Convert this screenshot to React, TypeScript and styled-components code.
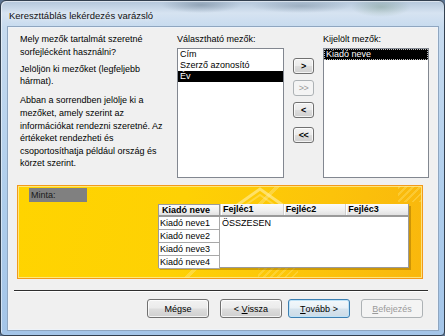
import React from 'react';
import styled, { createGlobalStyle, css } from 'styled-components';

const GlobalStyle = createGlobalStyle`
  html, body {
    margin: 0;
    padding: 0;
  }
  body {
    width: 445px;
    height: 336px;
    overflow: hidden;
    background: #5d7592;
    font-family: 'Liberation Sans', Arial, sans-serif;
  }
`;

const Window = styled.div`
  box-sizing: border-box;
  width: 445px;
  height: 336px;
  display: flex;
  flex-direction: column;
  border: 1px solid #33404f;
  border-radius: 6px 6px 4px 4px;
  padding: 0 6px 5px 7px;
  background:
    radial-gradient(ellipse 40px 8px at 200px 4px, rgba(90, 110, 130, 0.45), transparent),
    radial-gradient(ellipse 50px 7px at 300px 5px, rgba(90, 110, 130, 0.35), transparent),
    radial-gradient(ellipse 30px 10px at 380px 6px, rgba(80, 120, 90, 0.3), transparent),
    linear-gradient(180deg, #b3c6da 0px, #d6e3f1 12px, #c7dbef 26px, #aecdec 60%, #a4c5e8 100%);
  box-shadow: inset 1px 1px 0 rgba(255, 255, 255, 0.5);
`;

const TitleBar = styled.div`
  height: 26px;
  display: flex;
  align-items: center;
  padding: 2px 0 0 1px;
  box-sizing: border-box;
  font-size: 9.5px;
  color: #111;
  text-shadow: 0 0 6px rgba(255, 255, 255, 0.9);
`;

const Client = styled.div`
  flex: 1;
  display: flex;
  flex-direction: column;
  background: #f0f0f0;
  border: 1px solid #eef3f9;
  box-shadow: 0 0 0 1px #8fa6c0;
  font-size: 9px;
  color: #000;
`;

const TopSection = styled.div`
  display: grid;
  grid-template-columns: 148px 107px 21px 106px;
  column-gap: 9px;
  padding: 5px 0 0 11px;
`;

const Explain = styled.div`
  line-height: 12.6px;
  white-space: nowrap;
`;

const Para = styled.p<{ $after?: number }>`
  margin: 0 0 ${({ $after }) => $after ?? 0}px;
`;

const FieldColumn = styled.div`
  display: flex;
  flex-direction: column;
`;

const FieldLabel = styled.div`
  line-height: 12.6px;
  height: 15px;
`;

const ListBox = styled.div`
  box-sizing: border-box;
  height: 130px;
  background: #fff;
  border: 1px solid #828790;
`;

const ListItem = styled.div<{ $selected?: boolean; $focus?: boolean }>`
  height: 11px;
  line-height: 11px;
  padding-left: 2px;
  white-space: nowrap;
  ${({ $selected }) =>
    $selected &&
    css`
      background: #000;
      color: #fff;
    `}
  ${({ $focus }) =>
    $focus &&
    css`
      outline: 1px dotted #bbb;
      outline-offset: -1px;
    `}
`;

const ArrowColumn = styled.div`
  display: flex;
  flex-direction: column;
  padding-top: 25px;
`;

const buttonFace = css`
  box-sizing: border-box;
  border: 1px solid #707070;
  border-radius: 3px;
  background: linear-gradient(180deg, #f2f2f2 0%, #ebebeb 48%, #dddddd 52%, #cfcfcf 100%);
  box-shadow: inset 0 0 0 1px rgba(255, 255, 255, 0.75);
  font-family: 'Liberation Sans', Arial, sans-serif;
  color: #000;
  padding: 0;
  display: flex;
  align-items: center;
  justify-content: center;
  white-space: pre;
`;

const disabledFace = css`
  border-color: #adb2b5;
  background: #f4f4f4;
  box-shadow: none;
  color: #9a9a9a;
`;

const ArrowButton = styled.button<{ $disabled?: boolean; $gap?: number }>`
  ${buttonFace}
  width: 21px;
  height: 16px;
  margin-top: ${({ $gap }) => $gap ?? 0}px;
  font-size: 9px;
  font-weight: bold;
  letter-spacing: -0.5px;
  ${({ $disabled }) => $disabled && disabledFace}
  ${({ $disabled }) => $disabled && css`font-weight: normal;`}
`;

const SamplePanel = styled.div`
  box-sizing: border-box;
  width: 406px;
  height: 94px;
  margin: 7px 0 0 8px;
  border: 1px solid #f39a1b;
  box-shadow: inset 0 0 0 1px rgba(255, 236, 150, 0.8);
  display: flex;
  flex-direction: column;
  background:
    linear-gradient(135deg, transparent 0 52%, rgba(255, 255, 255, 0.22) 52% 53%, transparent 53%) 0 0 / 100% 100%,
    repeating-linear-gradient(-45deg, rgba(255, 230, 120, 0.35) 0 2px, transparent 2px 5px) 380px 0 / 30px 16px no-repeat,
    repeating-linear-gradient(-45deg, rgba(255, 230, 120, 0.35) 0 2px, transparent 2px 5px) 240px 78px / 40px 16px no-repeat,
    linear-gradient(100deg, #ffd400 0%, #fed104 40%, #fcc30a 75%, #f9b70d 100%);
`;

const Chevron = styled.svg`
  position: absolute;
  left: 212px;
  top: 0;
`;

const PanelInner = styled.div`
  position: relative;
  flex: 1;
  display: flex;
  flex-direction: column;
  padding: 2px 0 0 11px;
`;

const SampleTag = styled.div`
  box-sizing: border-box;
  width: 58px;
  height: 14px;
  line-height: 14px;
  padding-left: 2px;
  background: #808080;
  color: #1a1a1a;
`;

const SampleTable = styled.div`
  position: relative;
  margin: 2px 0 0 129px;
  width: 251px;
  display: grid;
  grid-template-columns: 62px 189px;
  grid-template-rows: 13px 51px;
  box-shadow: 2px 2px 0 rgba(120, 80, 0, 0.35);
`;

const headerFace = css`
  box-sizing: border-box;
  background: linear-gradient(180deg, #fafafa 0%, #efefef 60%, #e2e2e2 100%);
  border-bottom: 2px solid #9a9a9a;
  font-weight: bold;
  line-height: 11px;
`;

const RowHeadTitle = styled.div`
  ${headerFace}
  border: 1px solid #9a9a9a;
  border-bottom-width: 2px;
  padding-left: 3px;
`;

const ColumnHeads = styled.div`
  ${headerFace}
  display: grid;
  grid-template-columns: repeat(3, 1fr);
  border-right: 1px solid #9a9a9a;
`;

const ColumnHead = styled.div`
  padding-left: 2px;
  border-left: 1px solid #d0d0d0;
  box-shadow: inset 1px 0 0 #fff;
`;

const RowHeads = styled.div`
  display: grid;
  grid-template-rows: repeat(4, 1fr);
  background: #fff;
  border-left: 1px solid #9a9a9a;
`;

const RowHead = styled.div`
  box-sizing: border-box;
  border-bottom: 1px solid #a8a8a8;
  border-right: 1px solid #a8a8a8;
  line-height: 12px;
  padding-left: 1px;
  white-space: nowrap;
`;

const DataArea = styled.div`
  background: #fff;
  border-right: 1px solid #9a9a9a;
  border-bottom: 1px solid #9a9a9a;
  padding: 1px 0 0 2px;
  line-height: 11px;
`;

const Separator = styled.div`
  width: 414px;
  height: 1px;
  margin: 11px 0 0 5px;
  background: #2e2e2e;
  box-shadow: 0 1px 0 #fff;
`;

const ButtonRow = styled.div`
  display: flex;
  justify-content: flex-end;
  gap: 6px;
  padding: 8px 14px 0 0;
`;

const DialogButton = styled.button<{ $default?: boolean; $disabled?: boolean; $apart?: boolean }>`
  ${buttonFace}
  width: 62px;
  height: 19px;
  font-size: 9px;
  margin-left: ${({ $apart }) => ($apart ? 5 : 0)}px;
  u {
    text-decoration: underline;
    text-underline-offset: 1px;
  }
  ${({ $default }) =>
    $default &&
    css`
      border-color: #3c7fb1;
      box-shadow: inset 0 0 0 1px #bfe3f8;
      background: linear-gradient(180deg, #f3f8fb 0%, #e8f1f7 48%, #d6e4ee 52%, #ccdbe6 100%);
    `}
  ${({ $disabled }) => $disabled && disabledFace}
`;

const available = ['Cím', 'Szerző azonosító', 'Év'];
const publishers = ['Kiadó neve1', 'Kiadó neve2', 'Kiadó neve3', 'Kiadó neve4'];

export default function App() {
  return (
    <>
      <GlobalStyle />
      <Window>
        <TitleBar>Kereszttáblás lekérdezés varázsló</TitleBar>
        <Client>
          <TopSection>
            <Explain>
              <Para $after={4.5}>
                Mely mezők tartalmát szeretné
                <br />
                sorfejlécként használni?
              </Para>
              <Para $after={6.5}>
                Jelöljön ki mezőket (legfeljebb
                <br />
                hármat).
              </Para>
              <Para>
                Abban a sorrendben jelölje ki a
                <br />
                mezőket, amely szerint az
                <br />
                információkat rendezni szeretné. Az
                <br />
                értékeket rendezheti és
                <br />
                csoportosíthatja például ország és
                <br />
                körzet szerint.
              </Para>
            </Explain>

            <FieldColumn>
              <FieldLabel>Választható mezők:</FieldLabel>
              <ListBox>
                {available.map((name) => (
                  <ListItem key={name} $selected={name === 'Év'}>
                    {name}
                  </ListItem>
                ))}
              </ListBox>
            </FieldColumn>

            <ArrowColumn>
              <ArrowButton>&gt;</ArrowButton>
              <ArrowButton $disabled $gap={6}>
                &gt;&gt;
              </ArrowButton>
              <ArrowButton $gap={6}>&lt;</ArrowButton>
              <ArrowButton $gap={9}>&lt;&lt;</ArrowButton>
            </ArrowColumn>

            <FieldColumn>
              <FieldLabel>Kijelölt mezők:</FieldLabel>
              <ListBox>
                <ListItem $selected $focus>
                  Kiadó neve
                </ListItem>
              </ListBox>
            </FieldColumn>
          </TopSection>

          <SamplePanel>
            <PanelInner>
              <Chevron width="60" height="20" viewBox="0 0 60 20">
                <path d="M6 20 L30 3 L54 20" fill="none" stroke="rgba(255,240,170,0.6)" strokeWidth="3" />
                <path d="M14 20 L30 9 L46 20" fill="none" stroke="rgba(255,240,170,0.35)" strokeWidth="2" />
              </Chevron>
              <SampleTag>Minta:</SampleTag>
              <SampleTable>
                <RowHeadTitle>Kiadó neve</RowHeadTitle>
                <ColumnHeads>
                  <ColumnHead>Fejléc1</ColumnHead>
                  <ColumnHead>Fejléc2</ColumnHead>
                  <ColumnHead>Fejléc3</ColumnHead>
                </ColumnHeads>
                <RowHeads>
                  {publishers.map((p) => (
                    <RowHead key={p}>{p}</RowHead>
                  ))}
                </RowHeads>
                <DataArea>ÖSSZESEN</DataArea>
              </SampleTable>
            </PanelInner>
          </SamplePanel>

          <Separator />

          <ButtonRow>
            <DialogButton>Mégse</DialogButton>
            <DialogButton $apart>
              {'< '}
              <u>V</u>issza
            </DialogButton>
            <DialogButton $default>
              <u>T</u>ovább{' >'}
            </DialogButton>
            <DialogButton $disabled $apart>
              <u>B</u>efejezés
            </DialogButton>
          </ButtonRow>
        </Client>
      </Window>
    </>
  );
}
